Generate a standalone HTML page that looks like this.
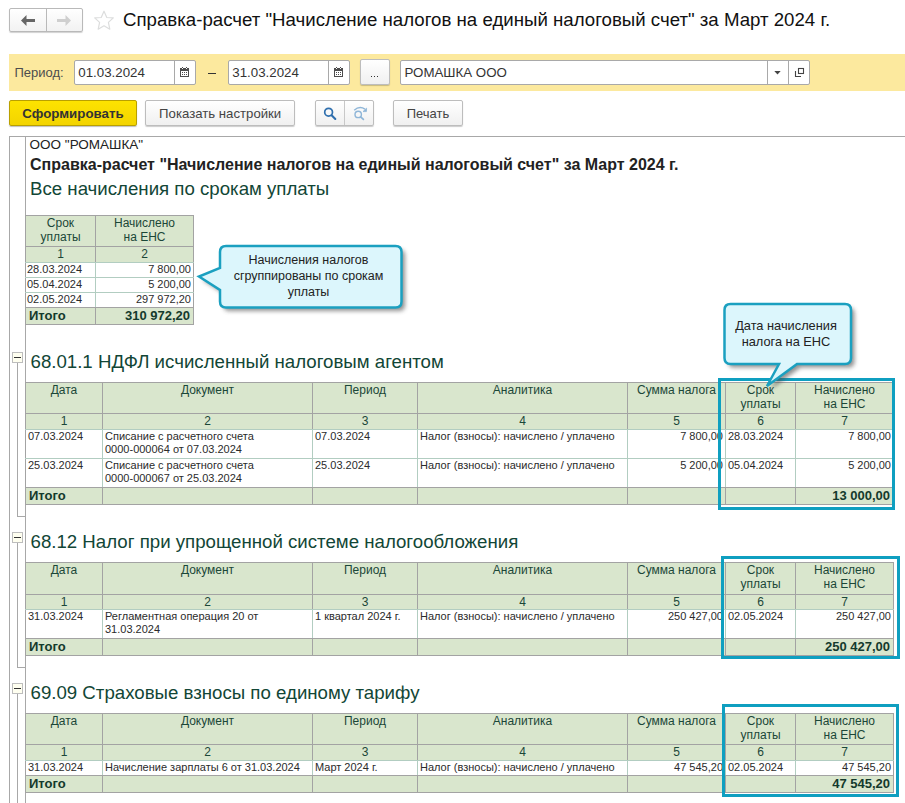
<!DOCTYPE html>
<html><head><meta charset="utf-8"><style>
html,body{margin:0;padding:0;background:#fff;width:905px;height:803px;overflow:hidden;position:relative;font-family:"Liberation Sans", sans-serif;}
</style></head><body>
<div style="position:absolute;left:9px;top:8px;width:73px;height:23px;border:1px solid #b9b9b9;border-radius:2px;background:linear-gradient(#fff,#f2f2f2);box-shadow:0 1px 1px rgba(0,0,0,.18);box-sizing:border-box;width:74px;height:24px"></div>
<div style="position:absolute;left:46px;top:8px;width:1px;height:24px;background:#b9b9b9"></div>
<svg style="position:absolute;left:20px;top:15px" width="16" height="11" viewBox="0 0 16 11"><path d="M1 5.5 L6.5 0 L6.5 4 L15 4 L15 7 L6.5 7 L6.5 11 Z" fill="#666"/></svg>
<svg style="position:absolute;left:56px;top:15px" width="16" height="11" viewBox="0 0 16 11"><path d="M15 5.5 L9.5 0 L9.5 4 L1 4 L1 7 L9.5 7 L9.5 11 Z" fill="#cfcfcf"/></svg>
<svg style="position:absolute;left:94px;top:10px" width="20" height="20" viewBox="0 0 20 20"><path d="M10 1.2 L12.8 7.5 L19.3 7.9 L14.4 12.4 L15.8 19.2 L10 15.8 L4.2 19.2 L5.6 12.4 L0.7 7.9 L7.2 7.5 Z" fill="none" stroke="#dcdddd" stroke-width="1.2" stroke-linejoin="round"/></svg>
<div style="position:absolute;top:7.53px;font-size:18.67px;line-height:23px;font-weight:400;color:#111;white-space:nowrap;left:123px;">Справка-расчет "Начисление налогов на единый налоговый счет" за Март 2024 г.</div>
<div style="position:absolute;left:9px;top:54px;width:896px;height:37px;background:#fce99e"></div>
<div style="position:absolute;top:64.50px;font-size:13px;line-height:16px;font-weight:400;color:#4d4d4d;white-space:nowrap;left:14.5px;">Период:</div>
<div style="position:absolute;left:74px;top:60px;width:122px;height:25px;box-sizing:border-box;border:1px solid #a9a9a9;border-radius:2px;background:#fff"></div>
<div style="position:absolute;left:174px;top:60px;width:1px;height:25px;background:#a9a9a9"></div>
<div style="position:absolute;top:64.29px;font-size:13.3px;line-height:17px;font-weight:400;color:#333;white-space:nowrap;left:78.3px;">01.03.2024</div>
<svg style="position:absolute;left:180px;top:66px" width="9" height="11" viewBox="0 0 9 11" shape-rendering="crispEdges"><rect x="0" y="2" width="9" height="9" rx="0.5" fill="#4d4d4d"/><rect x="1" y="5" width="7" height="5" fill="#fff"/><g fill="#4d4d4d"><rect x="2" y="6" width="1" height="1"/><rect x="4" y="6" width="1" height="1"/><rect x="6" y="6" width="1" height="1"/><rect x="2" y="8" width="1" height="1"/><rect x="4" y="8" width="1" height="1"/><rect x="6" y="8" width="1" height="1"/><rect x="2" y="1" width="1" height="1"/><rect x="6" y="1" width="1" height="1"/></g><g fill="#fff"><rect x="2" y="2" width="1" height="1"/><rect x="6" y="2" width="1" height="1"/></g></svg>
<div style="position:absolute;left:208px;top:73px;width:8px;height:1px;background:#333"></div>
<div style="position:absolute;left:228px;top:60px;width:122px;height:25px;box-sizing:border-box;border:1px solid #a9a9a9;border-radius:2px;background:#fff"></div>
<div style="position:absolute;left:328px;top:60px;width:1px;height:25px;background:#a9a9a9"></div>
<div style="position:absolute;top:64.29px;font-size:13.3px;line-height:17px;font-weight:400;color:#333;white-space:nowrap;left:232.3px;">31.03.2024</div>
<svg style="position:absolute;left:334px;top:66px" width="9" height="11" viewBox="0 0 9 11" shape-rendering="crispEdges"><rect x="0" y="2" width="9" height="9" rx="0.5" fill="#4d4d4d"/><rect x="1" y="5" width="7" height="5" fill="#fff"/><g fill="#4d4d4d"><rect x="2" y="6" width="1" height="1"/><rect x="4" y="6" width="1" height="1"/><rect x="6" y="6" width="1" height="1"/><rect x="2" y="8" width="1" height="1"/><rect x="4" y="8" width="1" height="1"/><rect x="6" y="8" width="1" height="1"/><rect x="2" y="1" width="1" height="1"/><rect x="6" y="1" width="1" height="1"/></g><g fill="#fff"><rect x="2" y="2" width="1" height="1"/><rect x="6" y="2" width="1" height="1"/></g></svg>
<div style="position:absolute;left:360px;top:59px;width:30px;height:26px;box-sizing:border-box;border:1px solid #bdbdbd;border-radius:2px;background:linear-gradient(#fff,#f0f0f0);box-shadow:0 1px 1px rgba(0,0,0,.2)"></div>
<div style="position:absolute;left:371px;top:76px;width:1px;height:1px;background:#333"></div>
<div style="position:absolute;left:374px;top:76px;width:1px;height:1px;background:#333"></div>
<div style="position:absolute;left:377px;top:76px;width:1px;height:1px;background:#333"></div>
<div style="position:absolute;left:400px;top:60px;width:410px;height:25px;box-sizing:border-box;border:1px solid #a9a9a9;border-radius:2px;background:#fff"></div>
<div style="position:absolute;left:767px;top:60px;width:1px;height:25px;background:#a9a9a9"></div>
<div style="position:absolute;left:788px;top:60px;width:1px;height:25px;background:#a9a9a9"></div>
<div style="position:absolute;top:64.29px;font-size:13.3px;line-height:17px;font-weight:400;color:#333;white-space:nowrap;left:404.5px;">РОМАШКА ООО</div>
<svg style="position:absolute;left:770px;top:64px" width="40" height="18" viewBox="770 64 40 18"><path d="M774.3 71 L780.7 71 L777.5 74.5 Z" fill="#444"/><rect x="798.5" y="68.5" width="5" height="5" fill="none" stroke="#444" stroke-width="1.1"/><path d="M795.5 71 V76.5 H801" fill="none" stroke="#444" stroke-width="1.1"/></svg>
<div style="position:absolute;left:9px;top:100px;width:128px;height:26px;box-sizing:border-box;border:1px solid #b9a000;border-radius:2px;background:linear-gradient(#fde300,#f3d400);box-shadow:0 1px 1px rgba(0,0,0,.25)"></div>
<div style="position:absolute;top:105.29px;font-size:13.3px;line-height:17px;font-weight:700;color:#333;white-space:nowrap;left:22.3px;">Сформировать</div>
<div style="position:absolute;left:145px;top:100px;width:150px;height:26px;box-sizing:border-box;border:1px solid #bdbdbd;border-radius:2px;background:linear-gradient(#fff,#f0f0f0);box-shadow:0 1px 1px rgba(0,0,0,.2)"></div>
<div style="position:absolute;top:106.23px;font-size:13.2px;line-height:16px;font-weight:400;color:#444;white-space:nowrap;left:159.1px;">Показать настройки</div>
<div style="position:absolute;left:315px;top:100px;width:59px;height:26px;box-sizing:border-box;border:1px solid #bdbdbd;border-radius:2px;background:linear-gradient(#fff,#f0f0f0);box-shadow:0 1px 1px rgba(0,0,0,.2)"></div>
<div style="position:absolute;left:344px;top:101px;width:1px;height:24px;background:#c8c8c8"></div>
<svg style="position:absolute;left:315px;top:100px" width="60" height="26" viewBox="315 100 60 26"><circle cx="328.6" cy="112.2" r="3.9" fill="none" stroke="#2f6fae" stroke-width="1.7"/><path d="M331.6 115.2 L335.3 118.9" stroke="#2f6fae" stroke-width="2.1" stroke-linecap="round"/><circle cx="358.2" cy="114.4" r="3.2" fill="none" stroke="#8fb6d8" stroke-width="1.4"/><path d="M360.6 116.8 L363.4 119.4" stroke="#8fb6d8" stroke-width="1.7" stroke-linecap="round"/><path d="M354.2 110.2 Q359.5 105.5 365 109.2" fill="none" stroke="#8fb6d8" stroke-width="1.4"/><path d="M366.6 108.2 L366.4 111.6 L363 111.6 Z" fill="#8fb6d8" stroke="#8fb6d8" stroke-width="0.8"/></svg>
<div style="position:absolute;left:393px;top:100px;width:70px;height:26px;box-sizing:border-box;border:1px solid #bdbdbd;border-radius:2px;background:linear-gradient(#fff,#f0f0f0);box-shadow:0 1px 1px rgba(0,0,0,.2)"></div>
<div style="position:absolute;top:106.30px;font-size:13px;line-height:16px;font-weight:400;color:#444;white-space:nowrap;left:406.7px;">Печать</div>
<div style="position:absolute;left:9px;top:136px;width:896px;height:1px;background:#a8a8a8"></div>
<div style="position:absolute;left:9px;top:136px;width:1px;height:667px;background:#a8a8a8"></div>
<div style="position:absolute;left:25px;top:136px;width:1px;height:667px;background:#a8a8a8"></div>
<div style="position:absolute;left:12px;top:352px;width:11px;height:11px;box-sizing:border-box;border:1px solid #bdbdbd;background:#fffff0"></div>
<div style="position:absolute;left:14px;top:357px;width:7px;height:1px;background:#333"></div>
<div style="position:absolute;left:17px;top:363px;width:1px;height:153px;background:#a8a8a8"></div>
<div style="position:absolute;left:17px;top:516px;width:8px;height:1px;background:#a8a8a8"></div>
<div style="position:absolute;left:12px;top:532px;width:11px;height:11px;box-sizing:border-box;border:1px solid #bdbdbd;background:#fffff0"></div>
<div style="position:absolute;left:14px;top:537px;width:7px;height:1px;background:#333"></div>
<div style="position:absolute;left:17px;top:543px;width:1px;height:124px;background:#a8a8a8"></div>
<div style="position:absolute;left:17px;top:667px;width:8px;height:1px;background:#a8a8a8"></div>
<div style="position:absolute;left:12px;top:683px;width:11px;height:11px;box-sizing:border-box;border:1px solid #bdbdbd;background:#fffff0"></div>
<div style="position:absolute;left:14px;top:688px;width:7px;height:1px;background:#333"></div>
<div style="position:absolute;left:17px;top:694px;width:1px;height:109px;background:#a8a8a8"></div>
<div style="position:absolute;top:136.12px;font-size:13.5px;line-height:17px;font-weight:400;color:#222;white-space:nowrap;left:29.6px;">ООО "РОМАШКА"</div>
<div style="position:absolute;top:154.86px;font-size:16px;line-height:20px;font-weight:700;color:#222;white-space:nowrap;left:30px;">Справка-расчет "Начисление налогов на единый налоговый счет" за Март 2024 г.</div>
<div style="position:absolute;top:176.83px;font-size:18.67px;line-height:23px;font-weight:400;color:#124636;white-space:nowrap;left:30px;">Все начисления по срокам уплаты</div>
<div style="position:absolute;left:25px;top:215px;width:168px;height:31px;background:#d9e6cd"></div>
<div style="position:absolute;left:25px;top:246px;width:168px;height:16px;background:#d9e6cd"></div>
<div style="position:absolute;left:25px;top:262px;width:168px;height:15px;background:#fff"></div>
<div style="position:absolute;left:25px;top:277px;width:168px;height:15px;background:#fff"></div>
<div style="position:absolute;left:25px;top:292px;width:168px;height:15px;background:#fff"></div>
<div style="position:absolute;left:25px;top:307px;width:168px;height:17px;background:#d9e6cd"></div>
<div style="position:absolute;left:25px;top:215px;width:169px;height:1px;background:#a3a3a3"></div>
<div style="position:absolute;left:25px;top:246px;width:169px;height:1px;background:#a3a3a3"></div>
<div style="position:absolute;left:25px;top:262px;width:169px;height:1px;background:#b2cdc1"></div>
<div style="position:absolute;left:25px;top:277px;width:169px;height:1px;background:#b2cdc1"></div>
<div style="position:absolute;left:25px;top:292px;width:169px;height:1px;background:#b2cdc1"></div>
<div style="position:absolute;left:25px;top:307px;width:169px;height:1px;background:#a3a3a3"></div>
<div style="position:absolute;left:25px;top:324px;width:169px;height:1px;background:#a3a3a3"></div>
<div style="position:absolute;left:25px;top:216px;width:1px;height:30px;background:#a3a3a3"></div>
<div style="position:absolute;left:95px;top:216px;width:1px;height:30px;background:#a3a3a3"></div>
<div style="position:absolute;left:193px;top:216px;width:1px;height:30px;background:#a3a3a3"></div>
<div style="position:absolute;left:25px;top:247px;width:1px;height:15px;background:#a3a3a3"></div>
<div style="position:absolute;left:95px;top:247px;width:1px;height:15px;background:#a3a3a3"></div>
<div style="position:absolute;left:193px;top:247px;width:1px;height:15px;background:#a3a3a3"></div>
<div style="position:absolute;left:25px;top:263px;width:1px;height:14px;background:#a3a3a3"></div>
<div style="position:absolute;left:95px;top:263px;width:1px;height:14px;background:#b2cdc1"></div>
<div style="position:absolute;left:193px;top:263px;width:1px;height:14px;background:#a3a3a3"></div>
<div style="position:absolute;left:25px;top:278px;width:1px;height:14px;background:#a3a3a3"></div>
<div style="position:absolute;left:95px;top:278px;width:1px;height:14px;background:#b2cdc1"></div>
<div style="position:absolute;left:193px;top:278px;width:1px;height:14px;background:#a3a3a3"></div>
<div style="position:absolute;left:25px;top:293px;width:1px;height:14px;background:#a3a3a3"></div>
<div style="position:absolute;left:95px;top:293px;width:1px;height:14px;background:#b2cdc1"></div>
<div style="position:absolute;left:193px;top:293px;width:1px;height:14px;background:#a3a3a3"></div>
<div style="position:absolute;left:25px;top:308px;width:1px;height:16px;background:#a3a3a3"></div>
<div style="position:absolute;left:95px;top:308px;width:1px;height:16px;background:#a3a3a3"></div>
<div style="position:absolute;left:193px;top:308px;width:1px;height:16px;background:#a3a3a3"></div>
<div style="position:absolute;top:216.24px;font-size:12px;line-height:15px;font-weight:400;color:#1b4738;white-space:nowrap;left:25.5px;width:70px;text-align:center;">Срок</div>
<div style="position:absolute;top:230.24px;font-size:12px;line-height:15px;font-weight:400;color:#1b4738;white-space:nowrap;left:25.5px;width:70px;text-align:center;">уплаты</div>
<div style="position:absolute;top:216.24px;font-size:12px;line-height:15px;font-weight:400;color:#1b4738;white-space:nowrap;left:95.5px;width:98px;text-align:center;">Начислено</div>
<div style="position:absolute;top:230.24px;font-size:12px;line-height:15px;font-weight:400;color:#1b4738;white-space:nowrap;left:95.5px;width:98px;text-align:center;">на ЕНС</div>
<div style="position:absolute;top:247.34px;font-size:12px;line-height:15px;font-weight:400;color:#1b4738;white-space:nowrap;left:25.5px;width:70px;text-align:center;">1</div>
<div style="position:absolute;top:247.34px;font-size:12px;line-height:15px;font-weight:400;color:#1b4738;white-space:nowrap;left:95.5px;width:98px;text-align:center;">2</div>
<div style="position:absolute;top:261.69px;font-size:11px;line-height:14px;font-weight:400;color:#2b2b2b;white-space:nowrap;left:27px;">28.03.2024</div>
<div style="position:absolute;top:261.69px;font-size:11px;line-height:14px;font-weight:400;color:#2b2b2b;white-space:nowrap;left:93px;width:98px;text-align:right;">7 800,00</div>
<div style="position:absolute;top:276.69px;font-size:11px;line-height:14px;font-weight:400;color:#2b2b2b;white-space:nowrap;left:27px;">05.04.2024</div>
<div style="position:absolute;top:276.69px;font-size:11px;line-height:14px;font-weight:400;color:#2b2b2b;white-space:nowrap;left:93px;width:98px;text-align:right;">5 200,00</div>
<div style="position:absolute;top:291.69px;font-size:11px;line-height:14px;font-weight:400;color:#2b2b2b;white-space:nowrap;left:27px;">02.05.2024</div>
<div style="position:absolute;top:291.69px;font-size:11px;line-height:14px;font-weight:400;color:#2b2b2b;white-space:nowrap;left:93px;width:98px;text-align:right;">297 972,20</div>
<div style="position:absolute;top:307.50px;font-size:13px;line-height:16px;font-weight:700;color:#143a2c;white-space:nowrap;left:29px;">Итого</div>
<div style="position:absolute;top:307.50px;font-size:13px;line-height:16px;font-weight:700;color:#143a2c;white-space:nowrap;left:92px;width:98px;text-align:right;">310 972,20</div>
<svg style="position:absolute;left:190px;top:238px" width="225" height="80" viewBox="0 0 225 80">
<defs><filter id="sh1" x="-20%" y="-20%" width="140%" height="160%"><feGaussianBlur stdDeviation="2"/></filter></defs>
<path d="M36 8 H205.5 Q211.5 8 211.5 14 V63.5 Q211.5 69.5 205.5 69.5 H36 Q30 69.5 30 63.5 V52 L9 38.5 L30 30 V14 Q30 8 36 8 Z" transform="translate(3.5,3.5)" fill="#4a4a4a" opacity="0.6" filter="url(#sh1)"/>
<path d="M36 8 H205.5 Q211.5 8 211.5 14 V63.5 Q211.5 69.5 205.5 69.5 H36 Q30 69.5 30 63.5 V52 L9 38.5 L30 30 V14 Q30 8 36 8 Z" fill="#dcf6fc" stroke="#1ba0c0" stroke-width="2.5"/>
</svg>
<div style="position:absolute;top:251.97px;font-size:12.5px;line-height:16px;font-weight:400;color:#222;white-space:nowrap;left:218.5px;width:180px;text-align:center;">Начисления налогов</div>
<div style="position:absolute;top:267.97px;font-size:12.5px;line-height:16px;font-weight:400;color:#222;white-space:nowrap;left:218.5px;width:180px;text-align:center;">сгруппированы по срокам</div>
<div style="position:absolute;top:283.67px;font-size:12.5px;line-height:16px;font-weight:400;color:#222;white-space:nowrap;left:218.5px;width:180px;text-align:center;">уплаты</div>
<div style="position:absolute;top:349.83px;font-size:18.67px;line-height:23px;font-weight:400;color:#124636;white-space:nowrap;left:30.5px;">68.01.1 НДФЛ исчисленный налоговым агентом</div>
<div style="position:absolute;left:25px;top:382px;width:868px;height:31px;background:#d9e6cd"></div>
<div style="position:absolute;left:25px;top:413px;width:868px;height:16px;background:#d9e6cd"></div>
<div style="position:absolute;left:25px;top:429px;width:868px;height:29px;background:#fff"></div>
<div style="position:absolute;left:25px;top:458px;width:868px;height:29px;background:#fff"></div>
<div style="position:absolute;left:25px;top:487px;width:868px;height:17px;background:#d9e6cd"></div>
<div style="position:absolute;left:25px;top:382px;width:869px;height:1px;background:#a3a3a3"></div>
<div style="position:absolute;left:25px;top:413px;width:869px;height:1px;background:#a3a3a3"></div>
<div style="position:absolute;left:25px;top:429px;width:869px;height:1px;background:#b2cdc1"></div>
<div style="position:absolute;left:25px;top:458px;width:869px;height:1px;background:#b2cdc1"></div>
<div style="position:absolute;left:25px;top:487px;width:869px;height:1px;background:#a3a3a3"></div>
<div style="position:absolute;left:25px;top:504px;width:869px;height:1px;background:#a3a3a3"></div>
<div style="position:absolute;left:25px;top:383px;width:1px;height:30px;background:#a3a3a3"></div>
<div style="position:absolute;left:102px;top:383px;width:1px;height:30px;background:#a3a3a3"></div>
<div style="position:absolute;left:312px;top:383px;width:1px;height:30px;background:#a3a3a3"></div>
<div style="position:absolute;left:417px;top:383px;width:1px;height:30px;background:#a3a3a3"></div>
<div style="position:absolute;left:627px;top:383px;width:1px;height:30px;background:#a3a3a3"></div>
<div style="position:absolute;left:725px;top:383px;width:1px;height:30px;background:#a3a3a3"></div>
<div style="position:absolute;left:795px;top:383px;width:1px;height:30px;background:#a3a3a3"></div>
<div style="position:absolute;left:893px;top:383px;width:1px;height:30px;background:#a3a3a3"></div>
<div style="position:absolute;left:25px;top:414px;width:1px;height:15px;background:#a3a3a3"></div>
<div style="position:absolute;left:102px;top:414px;width:1px;height:15px;background:#a3a3a3"></div>
<div style="position:absolute;left:312px;top:414px;width:1px;height:15px;background:#a3a3a3"></div>
<div style="position:absolute;left:417px;top:414px;width:1px;height:15px;background:#a3a3a3"></div>
<div style="position:absolute;left:627px;top:414px;width:1px;height:15px;background:#a3a3a3"></div>
<div style="position:absolute;left:725px;top:414px;width:1px;height:15px;background:#a3a3a3"></div>
<div style="position:absolute;left:795px;top:414px;width:1px;height:15px;background:#a3a3a3"></div>
<div style="position:absolute;left:893px;top:414px;width:1px;height:15px;background:#a3a3a3"></div>
<div style="position:absolute;left:25px;top:430px;width:1px;height:28px;background:#a3a3a3"></div>
<div style="position:absolute;left:102px;top:430px;width:1px;height:28px;background:#b2cdc1"></div>
<div style="position:absolute;left:312px;top:430px;width:1px;height:28px;background:#b2cdc1"></div>
<div style="position:absolute;left:417px;top:430px;width:1px;height:28px;background:#b2cdc1"></div>
<div style="position:absolute;left:627px;top:430px;width:1px;height:28px;background:#b2cdc1"></div>
<div style="position:absolute;left:725px;top:430px;width:1px;height:28px;background:#b2cdc1"></div>
<div style="position:absolute;left:795px;top:430px;width:1px;height:28px;background:#b2cdc1"></div>
<div style="position:absolute;left:893px;top:430px;width:1px;height:28px;background:#a3a3a3"></div>
<div style="position:absolute;left:25px;top:459px;width:1px;height:28px;background:#a3a3a3"></div>
<div style="position:absolute;left:102px;top:459px;width:1px;height:28px;background:#b2cdc1"></div>
<div style="position:absolute;left:312px;top:459px;width:1px;height:28px;background:#b2cdc1"></div>
<div style="position:absolute;left:417px;top:459px;width:1px;height:28px;background:#b2cdc1"></div>
<div style="position:absolute;left:627px;top:459px;width:1px;height:28px;background:#b2cdc1"></div>
<div style="position:absolute;left:725px;top:459px;width:1px;height:28px;background:#b2cdc1"></div>
<div style="position:absolute;left:795px;top:459px;width:1px;height:28px;background:#b2cdc1"></div>
<div style="position:absolute;left:893px;top:459px;width:1px;height:28px;background:#a3a3a3"></div>
<div style="position:absolute;left:25px;top:488px;width:1px;height:16px;background:#a3a3a3"></div>
<div style="position:absolute;left:102px;top:488px;width:1px;height:16px;background:#a3a3a3"></div>
<div style="position:absolute;left:312px;top:488px;width:1px;height:16px;background:#a3a3a3"></div>
<div style="position:absolute;left:417px;top:488px;width:1px;height:16px;background:#a3a3a3"></div>
<div style="position:absolute;left:627px;top:488px;width:1px;height:16px;background:#a3a3a3"></div>
<div style="position:absolute;left:725px;top:488px;width:1px;height:16px;background:#a3a3a3"></div>
<div style="position:absolute;left:795px;top:488px;width:1px;height:16px;background:#a3a3a3"></div>
<div style="position:absolute;left:893px;top:488px;width:1px;height:16px;background:#a3a3a3"></div>
<div style="position:absolute;top:382.94px;font-size:12px;line-height:15px;font-weight:400;color:#1b4738;white-space:nowrap;left:25.5px;width:77px;text-align:center;">Дата</div>
<div style="position:absolute;top:382.94px;font-size:12px;line-height:15px;font-weight:400;color:#1b4738;white-space:nowrap;left:102.5px;width:210px;text-align:center;">Документ</div>
<div style="position:absolute;top:382.94px;font-size:12px;line-height:15px;font-weight:400;color:#1b4738;white-space:nowrap;left:312.5px;width:105px;text-align:center;">Период</div>
<div style="position:absolute;top:382.94px;font-size:12px;line-height:15px;font-weight:400;color:#1b4738;white-space:nowrap;left:417.5px;width:210px;text-align:center;">Аналитика</div>
<div style="position:absolute;top:382.94px;font-size:12px;line-height:15px;font-weight:400;color:#1b4738;white-space:nowrap;left:627.5px;width:98px;text-align:center;">Сумма налога</div>
<div style="position:absolute;top:382.94px;font-size:12px;line-height:15px;font-weight:400;color:#1b4738;white-space:nowrap;left:725.5px;width:70px;text-align:center;">Срок</div>
<div style="position:absolute;top:396.64px;font-size:12px;line-height:15px;font-weight:400;color:#1b4738;white-space:nowrap;left:725.5px;width:70px;text-align:center;">уплаты</div>
<div style="position:absolute;top:382.94px;font-size:12px;line-height:15px;font-weight:400;color:#1b4738;white-space:nowrap;left:795.5px;width:98px;text-align:center;">Начислено</div>
<div style="position:absolute;top:396.64px;font-size:12px;line-height:15px;font-weight:400;color:#1b4738;white-space:nowrap;left:795.5px;width:98px;text-align:center;">на ЕНС</div>
<div style="position:absolute;top:413.54px;font-size:12px;line-height:15px;font-weight:400;color:#1b4738;white-space:nowrap;left:25.5px;width:77px;text-align:center;">1</div>
<div style="position:absolute;top:413.54px;font-size:12px;line-height:15px;font-weight:400;color:#1b4738;white-space:nowrap;left:102.5px;width:210px;text-align:center;">2</div>
<div style="position:absolute;top:413.54px;font-size:12px;line-height:15px;font-weight:400;color:#1b4738;white-space:nowrap;left:312.5px;width:105px;text-align:center;">3</div>
<div style="position:absolute;top:413.54px;font-size:12px;line-height:15px;font-weight:400;color:#1b4738;white-space:nowrap;left:417.5px;width:210px;text-align:center;">4</div>
<div style="position:absolute;top:413.54px;font-size:12px;line-height:15px;font-weight:400;color:#1b4738;white-space:nowrap;left:627.5px;width:98px;text-align:center;">5</div>
<div style="position:absolute;top:413.54px;font-size:12px;line-height:15px;font-weight:400;color:#1b4738;white-space:nowrap;left:725.5px;width:70px;text-align:center;">6</div>
<div style="position:absolute;top:413.54px;font-size:12px;line-height:15px;font-weight:400;color:#1b4738;white-space:nowrap;left:795.5px;width:98px;text-align:center;">7</div>
<div style="position:absolute;top:429.19px;font-size:11px;line-height:14px;font-weight:400;color:#2b2b2b;white-space:nowrap;left:28px;">07.03.2024</div>
<div style="position:absolute;top:429.19px;font-size:11px;line-height:14px;font-weight:400;color:#2b2b2b;white-space:nowrap;left:105px;">Списание с расчетного счета</div>
<div style="position:absolute;top:441.79px;font-size:11px;line-height:14px;font-weight:400;color:#2b2b2b;white-space:nowrap;left:105px;">0000-000064 от 07.03.2024</div>
<div style="position:absolute;top:429.19px;font-size:11px;line-height:14px;font-weight:400;color:#2b2b2b;white-space:nowrap;left:315px;">07.03.2024</div>
<div style="position:absolute;top:429.19px;font-size:11px;line-height:14px;font-weight:400;color:#2b2b2b;white-space:nowrap;left:420px;">Налог (взносы): начислено / уплачено</div>
<div style="position:absolute;top:429.19px;font-size:11px;line-height:14px;font-weight:400;color:#2b2b2b;white-space:nowrap;left:625px;width:98px;text-align:right;">7 800,00</div>
<div style="position:absolute;top:429.19px;font-size:11px;line-height:14px;font-weight:400;color:#2b2b2b;white-space:nowrap;left:728px;">28.03.2024</div>
<div style="position:absolute;top:429.19px;font-size:11px;line-height:14px;font-weight:400;color:#2b2b2b;white-space:nowrap;left:793px;width:98px;text-align:right;">7 800,00</div>
<div style="position:absolute;top:458.19px;font-size:11px;line-height:14px;font-weight:400;color:#2b2b2b;white-space:nowrap;left:28px;">25.03.2024</div>
<div style="position:absolute;top:458.19px;font-size:11px;line-height:14px;font-weight:400;color:#2b2b2b;white-space:nowrap;left:105px;">Списание с расчетного счета</div>
<div style="position:absolute;top:470.79px;font-size:11px;line-height:14px;font-weight:400;color:#2b2b2b;white-space:nowrap;left:105px;">0000-000067 от 25.03.2024</div>
<div style="position:absolute;top:458.19px;font-size:11px;line-height:14px;font-weight:400;color:#2b2b2b;white-space:nowrap;left:315px;">25.03.2024</div>
<div style="position:absolute;top:458.19px;font-size:11px;line-height:14px;font-weight:400;color:#2b2b2b;white-space:nowrap;left:420px;">Налог (взносы): начислено / уплачено</div>
<div style="position:absolute;top:458.19px;font-size:11px;line-height:14px;font-weight:400;color:#2b2b2b;white-space:nowrap;left:625px;width:98px;text-align:right;">5 200,00</div>
<div style="position:absolute;top:458.19px;font-size:11px;line-height:14px;font-weight:400;color:#2b2b2b;white-space:nowrap;left:728px;">05.04.2024</div>
<div style="position:absolute;top:458.19px;font-size:11px;line-height:14px;font-weight:400;color:#2b2b2b;white-space:nowrap;left:793px;width:98px;text-align:right;">5 200,00</div>
<div style="position:absolute;top:487.70px;font-size:13px;line-height:16px;font-weight:700;color:#143a2c;white-space:nowrap;left:29px;">Итого</div>
<div style="position:absolute;top:487.70px;font-size:13px;line-height:16px;font-weight:700;color:#143a2c;white-space:nowrap;left:792px;width:98px;text-align:right;">13 000,00</div>
<div style="position:absolute;left:718px;top:378px;width:171px;height:126px;border:3px solid #0f9fc0"></div>
<div style="position:absolute;top:529.83px;font-size:18.67px;line-height:23px;font-weight:400;color:#124636;white-space:nowrap;left:30.5px;">68.12 Налог при упрощенной системе налогообложения</div>
<div style="position:absolute;left:25px;top:562px;width:868px;height:32px;background:#d9e6cd"></div>
<div style="position:absolute;left:25px;top:594px;width:868px;height:15px;background:#d9e6cd"></div>
<div style="position:absolute;left:25px;top:609px;width:868px;height:29px;background:#fff"></div>
<div style="position:absolute;left:25px;top:638px;width:868px;height:17px;background:#d9e6cd"></div>
<div style="position:absolute;left:25px;top:562px;width:869px;height:1px;background:#a3a3a3"></div>
<div style="position:absolute;left:25px;top:594px;width:869px;height:1px;background:#a3a3a3"></div>
<div style="position:absolute;left:25px;top:609px;width:869px;height:1px;background:#b2cdc1"></div>
<div style="position:absolute;left:25px;top:638px;width:869px;height:1px;background:#a3a3a3"></div>
<div style="position:absolute;left:25px;top:655px;width:869px;height:1px;background:#a3a3a3"></div>
<div style="position:absolute;left:25px;top:563px;width:1px;height:31px;background:#a3a3a3"></div>
<div style="position:absolute;left:102px;top:563px;width:1px;height:31px;background:#a3a3a3"></div>
<div style="position:absolute;left:312px;top:563px;width:1px;height:31px;background:#a3a3a3"></div>
<div style="position:absolute;left:417px;top:563px;width:1px;height:31px;background:#a3a3a3"></div>
<div style="position:absolute;left:627px;top:563px;width:1px;height:31px;background:#a3a3a3"></div>
<div style="position:absolute;left:725px;top:563px;width:1px;height:31px;background:#a3a3a3"></div>
<div style="position:absolute;left:795px;top:563px;width:1px;height:31px;background:#a3a3a3"></div>
<div style="position:absolute;left:893px;top:563px;width:1px;height:31px;background:#a3a3a3"></div>
<div style="position:absolute;left:25px;top:595px;width:1px;height:14px;background:#a3a3a3"></div>
<div style="position:absolute;left:102px;top:595px;width:1px;height:14px;background:#a3a3a3"></div>
<div style="position:absolute;left:312px;top:595px;width:1px;height:14px;background:#a3a3a3"></div>
<div style="position:absolute;left:417px;top:595px;width:1px;height:14px;background:#a3a3a3"></div>
<div style="position:absolute;left:627px;top:595px;width:1px;height:14px;background:#a3a3a3"></div>
<div style="position:absolute;left:725px;top:595px;width:1px;height:14px;background:#a3a3a3"></div>
<div style="position:absolute;left:795px;top:595px;width:1px;height:14px;background:#a3a3a3"></div>
<div style="position:absolute;left:893px;top:595px;width:1px;height:14px;background:#a3a3a3"></div>
<div style="position:absolute;left:25px;top:610px;width:1px;height:28px;background:#a3a3a3"></div>
<div style="position:absolute;left:102px;top:610px;width:1px;height:28px;background:#b2cdc1"></div>
<div style="position:absolute;left:312px;top:610px;width:1px;height:28px;background:#b2cdc1"></div>
<div style="position:absolute;left:417px;top:610px;width:1px;height:28px;background:#b2cdc1"></div>
<div style="position:absolute;left:627px;top:610px;width:1px;height:28px;background:#b2cdc1"></div>
<div style="position:absolute;left:725px;top:610px;width:1px;height:28px;background:#b2cdc1"></div>
<div style="position:absolute;left:795px;top:610px;width:1px;height:28px;background:#b2cdc1"></div>
<div style="position:absolute;left:893px;top:610px;width:1px;height:28px;background:#a3a3a3"></div>
<div style="position:absolute;left:25px;top:639px;width:1px;height:16px;background:#a3a3a3"></div>
<div style="position:absolute;left:102px;top:639px;width:1px;height:16px;background:#a3a3a3"></div>
<div style="position:absolute;left:312px;top:639px;width:1px;height:16px;background:#a3a3a3"></div>
<div style="position:absolute;left:417px;top:639px;width:1px;height:16px;background:#a3a3a3"></div>
<div style="position:absolute;left:627px;top:639px;width:1px;height:16px;background:#a3a3a3"></div>
<div style="position:absolute;left:725px;top:639px;width:1px;height:16px;background:#a3a3a3"></div>
<div style="position:absolute;left:795px;top:639px;width:1px;height:16px;background:#a3a3a3"></div>
<div style="position:absolute;left:893px;top:639px;width:1px;height:16px;background:#a3a3a3"></div>
<div style="position:absolute;top:562.94px;font-size:12px;line-height:15px;font-weight:400;color:#1b4738;white-space:nowrap;left:25.5px;width:77px;text-align:center;">Дата</div>
<div style="position:absolute;top:562.94px;font-size:12px;line-height:15px;font-weight:400;color:#1b4738;white-space:nowrap;left:102.5px;width:210px;text-align:center;">Документ</div>
<div style="position:absolute;top:562.94px;font-size:12px;line-height:15px;font-weight:400;color:#1b4738;white-space:nowrap;left:312.5px;width:105px;text-align:center;">Период</div>
<div style="position:absolute;top:562.94px;font-size:12px;line-height:15px;font-weight:400;color:#1b4738;white-space:nowrap;left:417.5px;width:210px;text-align:center;">Аналитика</div>
<div style="position:absolute;top:562.94px;font-size:12px;line-height:15px;font-weight:400;color:#1b4738;white-space:nowrap;left:627.5px;width:98px;text-align:center;">Сумма налога</div>
<div style="position:absolute;top:562.94px;font-size:12px;line-height:15px;font-weight:400;color:#1b4738;white-space:nowrap;left:725.5px;width:70px;text-align:center;">Срок</div>
<div style="position:absolute;top:576.64px;font-size:12px;line-height:15px;font-weight:400;color:#1b4738;white-space:nowrap;left:725.5px;width:70px;text-align:center;">уплаты</div>
<div style="position:absolute;top:562.94px;font-size:12px;line-height:15px;font-weight:400;color:#1b4738;white-space:nowrap;left:795.5px;width:98px;text-align:center;">Начислено</div>
<div style="position:absolute;top:576.64px;font-size:12px;line-height:15px;font-weight:400;color:#1b4738;white-space:nowrap;left:795.5px;width:98px;text-align:center;">на ЕНС</div>
<div style="position:absolute;top:594.54px;font-size:12px;line-height:15px;font-weight:400;color:#1b4738;white-space:nowrap;left:25.5px;width:77px;text-align:center;">1</div>
<div style="position:absolute;top:594.54px;font-size:12px;line-height:15px;font-weight:400;color:#1b4738;white-space:nowrap;left:102.5px;width:210px;text-align:center;">2</div>
<div style="position:absolute;top:594.54px;font-size:12px;line-height:15px;font-weight:400;color:#1b4738;white-space:nowrap;left:312.5px;width:105px;text-align:center;">3</div>
<div style="position:absolute;top:594.54px;font-size:12px;line-height:15px;font-weight:400;color:#1b4738;white-space:nowrap;left:417.5px;width:210px;text-align:center;">4</div>
<div style="position:absolute;top:594.54px;font-size:12px;line-height:15px;font-weight:400;color:#1b4738;white-space:nowrap;left:627.5px;width:98px;text-align:center;">5</div>
<div style="position:absolute;top:594.54px;font-size:12px;line-height:15px;font-weight:400;color:#1b4738;white-space:nowrap;left:725.5px;width:70px;text-align:center;">6</div>
<div style="position:absolute;top:594.54px;font-size:12px;line-height:15px;font-weight:400;color:#1b4738;white-space:nowrap;left:795.5px;width:98px;text-align:center;">7</div>
<div style="position:absolute;top:609.19px;font-size:11px;line-height:14px;font-weight:400;color:#2b2b2b;white-space:nowrap;left:28px;">31.03.2024</div>
<div style="position:absolute;top:609.19px;font-size:11px;line-height:14px;font-weight:400;color:#2b2b2b;white-space:nowrap;left:105px;">Регламентная операция 20 от</div>
<div style="position:absolute;top:621.79px;font-size:11px;line-height:14px;font-weight:400;color:#2b2b2b;white-space:nowrap;left:105px;">31.03.2024</div>
<div style="position:absolute;top:609.19px;font-size:11px;line-height:14px;font-weight:400;color:#2b2b2b;white-space:nowrap;left:315px;">1 квартал 2024 г.</div>
<div style="position:absolute;top:609.19px;font-size:11px;line-height:14px;font-weight:400;color:#2b2b2b;white-space:nowrap;left:420px;">Налог (взносы): начислено / уплачено</div>
<div style="position:absolute;top:609.19px;font-size:11px;line-height:14px;font-weight:400;color:#2b2b2b;white-space:nowrap;left:625px;width:98px;text-align:right;">250 427,00</div>
<div style="position:absolute;top:609.19px;font-size:11px;line-height:14px;font-weight:400;color:#2b2b2b;white-space:nowrap;left:728px;">02.05.2024</div>
<div style="position:absolute;top:609.19px;font-size:11px;line-height:14px;font-weight:400;color:#2b2b2b;white-space:nowrap;left:793px;width:98px;text-align:right;">250 427,00</div>
<div style="position:absolute;top:638.70px;font-size:13px;line-height:16px;font-weight:700;color:#143a2c;white-space:nowrap;left:29px;">Итого</div>
<div style="position:absolute;top:638.70px;font-size:13px;line-height:16px;font-weight:700;color:#143a2c;white-space:nowrap;left:792px;width:98px;text-align:right;">250 427,00</div>
<div style="position:absolute;left:721px;top:556px;width:173px;height:97px;border:3px solid #0f9fc0"></div>
<div style="position:absolute;top:680.73px;font-size:18.67px;line-height:23px;font-weight:400;color:#124636;white-space:nowrap;left:30.5px;">69.09 Страховые взносы по единому тарифу</div>
<div style="position:absolute;left:25px;top:713px;width:868px;height:31px;background:#d9e6cd"></div>
<div style="position:absolute;left:25px;top:744px;width:868px;height:16px;background:#d9e6cd"></div>
<div style="position:absolute;left:25px;top:760px;width:868px;height:15px;background:#fff"></div>
<div style="position:absolute;left:25px;top:775px;width:868px;height:17px;background:#d9e6cd"></div>
<div style="position:absolute;left:25px;top:713px;width:869px;height:1px;background:#a3a3a3"></div>
<div style="position:absolute;left:25px;top:744px;width:869px;height:1px;background:#a3a3a3"></div>
<div style="position:absolute;left:25px;top:760px;width:869px;height:1px;background:#b2cdc1"></div>
<div style="position:absolute;left:25px;top:775px;width:869px;height:1px;background:#a3a3a3"></div>
<div style="position:absolute;left:25px;top:792px;width:869px;height:1px;background:#a3a3a3"></div>
<div style="position:absolute;left:25px;top:714px;width:1px;height:30px;background:#a3a3a3"></div>
<div style="position:absolute;left:102px;top:714px;width:1px;height:30px;background:#a3a3a3"></div>
<div style="position:absolute;left:312px;top:714px;width:1px;height:30px;background:#a3a3a3"></div>
<div style="position:absolute;left:417px;top:714px;width:1px;height:30px;background:#a3a3a3"></div>
<div style="position:absolute;left:627px;top:714px;width:1px;height:30px;background:#a3a3a3"></div>
<div style="position:absolute;left:725px;top:714px;width:1px;height:30px;background:#a3a3a3"></div>
<div style="position:absolute;left:795px;top:714px;width:1px;height:30px;background:#a3a3a3"></div>
<div style="position:absolute;left:893px;top:714px;width:1px;height:30px;background:#a3a3a3"></div>
<div style="position:absolute;left:25px;top:745px;width:1px;height:15px;background:#a3a3a3"></div>
<div style="position:absolute;left:102px;top:745px;width:1px;height:15px;background:#a3a3a3"></div>
<div style="position:absolute;left:312px;top:745px;width:1px;height:15px;background:#a3a3a3"></div>
<div style="position:absolute;left:417px;top:745px;width:1px;height:15px;background:#a3a3a3"></div>
<div style="position:absolute;left:627px;top:745px;width:1px;height:15px;background:#a3a3a3"></div>
<div style="position:absolute;left:725px;top:745px;width:1px;height:15px;background:#a3a3a3"></div>
<div style="position:absolute;left:795px;top:745px;width:1px;height:15px;background:#a3a3a3"></div>
<div style="position:absolute;left:893px;top:745px;width:1px;height:15px;background:#a3a3a3"></div>
<div style="position:absolute;left:25px;top:761px;width:1px;height:14px;background:#a3a3a3"></div>
<div style="position:absolute;left:102px;top:761px;width:1px;height:14px;background:#b2cdc1"></div>
<div style="position:absolute;left:312px;top:761px;width:1px;height:14px;background:#b2cdc1"></div>
<div style="position:absolute;left:417px;top:761px;width:1px;height:14px;background:#b2cdc1"></div>
<div style="position:absolute;left:627px;top:761px;width:1px;height:14px;background:#b2cdc1"></div>
<div style="position:absolute;left:725px;top:761px;width:1px;height:14px;background:#b2cdc1"></div>
<div style="position:absolute;left:795px;top:761px;width:1px;height:14px;background:#b2cdc1"></div>
<div style="position:absolute;left:893px;top:761px;width:1px;height:14px;background:#a3a3a3"></div>
<div style="position:absolute;left:25px;top:776px;width:1px;height:16px;background:#a3a3a3"></div>
<div style="position:absolute;left:102px;top:776px;width:1px;height:16px;background:#a3a3a3"></div>
<div style="position:absolute;left:312px;top:776px;width:1px;height:16px;background:#a3a3a3"></div>
<div style="position:absolute;left:417px;top:776px;width:1px;height:16px;background:#a3a3a3"></div>
<div style="position:absolute;left:627px;top:776px;width:1px;height:16px;background:#a3a3a3"></div>
<div style="position:absolute;left:725px;top:776px;width:1px;height:16px;background:#a3a3a3"></div>
<div style="position:absolute;left:795px;top:776px;width:1px;height:16px;background:#a3a3a3"></div>
<div style="position:absolute;left:893px;top:776px;width:1px;height:16px;background:#a3a3a3"></div>
<div style="position:absolute;top:713.94px;font-size:12px;line-height:15px;font-weight:400;color:#1b4738;white-space:nowrap;left:25.5px;width:77px;text-align:center;">Дата</div>
<div style="position:absolute;top:713.94px;font-size:12px;line-height:15px;font-weight:400;color:#1b4738;white-space:nowrap;left:102.5px;width:210px;text-align:center;">Документ</div>
<div style="position:absolute;top:713.94px;font-size:12px;line-height:15px;font-weight:400;color:#1b4738;white-space:nowrap;left:312.5px;width:105px;text-align:center;">Период</div>
<div style="position:absolute;top:713.94px;font-size:12px;line-height:15px;font-weight:400;color:#1b4738;white-space:nowrap;left:417.5px;width:210px;text-align:center;">Аналитика</div>
<div style="position:absolute;top:713.94px;font-size:12px;line-height:15px;font-weight:400;color:#1b4738;white-space:nowrap;left:627.5px;width:98px;text-align:center;">Сумма налога</div>
<div style="position:absolute;top:713.94px;font-size:12px;line-height:15px;font-weight:400;color:#1b4738;white-space:nowrap;left:725.5px;width:70px;text-align:center;">Срок</div>
<div style="position:absolute;top:727.64px;font-size:12px;line-height:15px;font-weight:400;color:#1b4738;white-space:nowrap;left:725.5px;width:70px;text-align:center;">уплаты</div>
<div style="position:absolute;top:713.94px;font-size:12px;line-height:15px;font-weight:400;color:#1b4738;white-space:nowrap;left:795.5px;width:98px;text-align:center;">Начислено</div>
<div style="position:absolute;top:727.64px;font-size:12px;line-height:15px;font-weight:400;color:#1b4738;white-space:nowrap;left:795.5px;width:98px;text-align:center;">на ЕНС</div>
<div style="position:absolute;top:744.54px;font-size:12px;line-height:15px;font-weight:400;color:#1b4738;white-space:nowrap;left:25.5px;width:77px;text-align:center;">1</div>
<div style="position:absolute;top:744.54px;font-size:12px;line-height:15px;font-weight:400;color:#1b4738;white-space:nowrap;left:102.5px;width:210px;text-align:center;">2</div>
<div style="position:absolute;top:744.54px;font-size:12px;line-height:15px;font-weight:400;color:#1b4738;white-space:nowrap;left:312.5px;width:105px;text-align:center;">3</div>
<div style="position:absolute;top:744.54px;font-size:12px;line-height:15px;font-weight:400;color:#1b4738;white-space:nowrap;left:417.5px;width:210px;text-align:center;">4</div>
<div style="position:absolute;top:744.54px;font-size:12px;line-height:15px;font-weight:400;color:#1b4738;white-space:nowrap;left:627.5px;width:98px;text-align:center;">5</div>
<div style="position:absolute;top:744.54px;font-size:12px;line-height:15px;font-weight:400;color:#1b4738;white-space:nowrap;left:725.5px;width:70px;text-align:center;">6</div>
<div style="position:absolute;top:744.54px;font-size:12px;line-height:15px;font-weight:400;color:#1b4738;white-space:nowrap;left:795.5px;width:98px;text-align:center;">7</div>
<div style="position:absolute;top:760.19px;font-size:11px;line-height:14px;font-weight:400;color:#2b2b2b;white-space:nowrap;left:28px;">31.03.2024</div>
<div style="position:absolute;top:760.19px;font-size:11px;line-height:14px;font-weight:400;color:#2b2b2b;white-space:nowrap;left:105px;">Начисление зарплаты 6 от 31.03.2024</div>
<div style="position:absolute;top:760.19px;font-size:11px;line-height:14px;font-weight:400;color:#2b2b2b;white-space:nowrap;left:315px;">Март 2024 г.</div>
<div style="position:absolute;top:760.19px;font-size:11px;line-height:14px;font-weight:400;color:#2b2b2b;white-space:nowrap;left:420px;">Налог (взносы): начислено / уплачено</div>
<div style="position:absolute;top:760.19px;font-size:11px;line-height:14px;font-weight:400;color:#2b2b2b;white-space:nowrap;left:625px;width:98px;text-align:right;">47 545,20</div>
<div style="position:absolute;top:760.19px;font-size:11px;line-height:14px;font-weight:400;color:#2b2b2b;white-space:nowrap;left:728px;">02.05.2024</div>
<div style="position:absolute;top:760.19px;font-size:11px;line-height:14px;font-weight:400;color:#2b2b2b;white-space:nowrap;left:793px;width:98px;text-align:right;">47 545,20</div>
<div style="position:absolute;top:775.70px;font-size:13px;line-height:16px;font-weight:700;color:#143a2c;white-space:nowrap;left:29px;">Итого</div>
<div style="position:absolute;top:775.70px;font-size:13px;line-height:16px;font-weight:700;color:#143a2c;white-space:nowrap;left:792px;width:98px;text-align:right;">47 545,20</div>
<div style="position:absolute;left:722px;top:704px;width:171px;height:87px;border:3px solid #0f9fc0"></div>
<svg style="position:absolute;left:715px;top:296px" width="150" height="100" viewBox="0 0 150 100">
<defs><filter id="sh2" x="-20%" y="-20%" width="140%" height="160%"><feGaussianBlur stdDeviation="2"/></filter></defs>
<path d="M15.5 8 H130 Q136 8 136 14 V62 Q136 68 130 68 H82 L52 90 L64 68 H15.5 Q9.5 68 9.5 62 V14 Q9.5 8 15.5 8 Z" transform="translate(3.5,3.5)" fill="#4a4a4a" opacity="0.6" filter="url(#sh2)"/>
<path d="M15.5 8 H130 Q136 8 136 14 V62 Q136 68 130 68 H82 L52 90 L64 68 H15.5 Q9.5 68 9.5 62 V14 Q9.5 8 15.5 8 Z" fill="#dcf6fc" stroke="#1ba0c0" stroke-width="2.5"/>
</svg>
<div style="position:absolute;top:317.56px;font-size:12.8px;line-height:16px;font-weight:400;color:#222;white-space:nowrap;left:726.0px;width:120px;text-align:center;">Дата начисления</div>
<div style="position:absolute;top:333.86px;font-size:12.8px;line-height:16px;font-weight:400;color:#222;white-space:nowrap;left:726.0px;width:120px;text-align:center;">налога на ЕНС</div>
</body></html>
